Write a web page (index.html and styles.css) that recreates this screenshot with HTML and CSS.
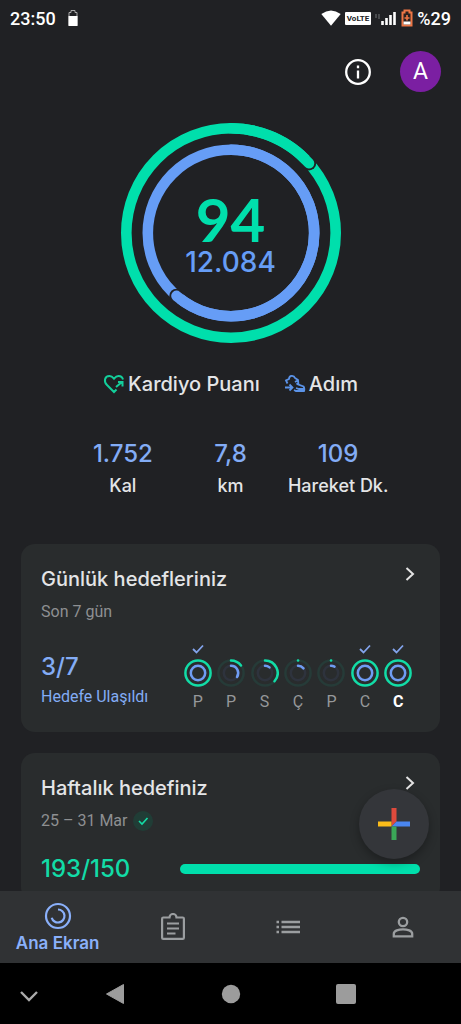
FILE: index.html
```html
<!DOCTYPE html>
<html lang="tr">
<head>
<meta charset="utf-8">
<meta name="viewport" content="width=device-width, initial-scale=1">
<title>Ana Ekran</title>
<link rel="stylesheet" href="styles.css">
</head>
<body>
<div class="screen">
  <header class="status">
    <div class="status-group">
      <span>23:50</span>
      <svg class="status-battery" width="10" height="18" viewBox="0 0 10 18"><path d="M1 16.500V3.500h2V1.500h4v2h2v13z" fill="none" stroke="#aaa"/><path d="M.5 7h9v10h-9z" fill="#fff"/></svg>
    </div>
    <div class="status-group status-right">
      <svg width="20" height="16" viewBox="0 0 20 16"><path d="M.3 4Q10-3.200 19.700 4L10 15.800z" fill="#fff"/></svg>
      <span class="volte">VoLTE</span>
      <svg width="22" height="16" viewBox="0 0 22 16"><path d="M1 4v4M4 4v5" stroke="#55585b" stroke-width="1.500"/><path d="M7.500 11v4M11.500 8v7M15.500 5v10M19.500 2v13" stroke="#fff" stroke-width="2.600"/></svg>
      <svg width="12" height="18" viewBox="0 0 12 18"><path d="M1.500 16.500v-13h2v-2h5v2h2v13z" fill="#2a211f" stroke="#ee7645" stroke-width="2"/><path d="M2.500 12.500h7v3h-7z" fill="#fff"/><path d="M6 6v5.500M3.500 9h5" stroke="#ee7645" stroke-width="1.600"/></svg>
      <span>%29</span>
    </div>
  </header>

  <div class="viewport">
    <main class="content">
      <div class="toolbar">
        <button class="icon-button" aria-label="Bilgi">
          <svg width="28" height="28" viewBox="0 0 28 28" fill="none" stroke="#fff" stroke-width="2.300"><circle cx="14" cy="14" r="11.800"/><path d="M14 12.500v8M14 7.500v2.800"/></svg>
        </button>
        <button class="avatar" aria-label="Hesap">A</button>
      </div>

      <section class="rings">
        <svg class="rings-art" viewBox="0 0 220 220" fill="none">
          <g stroke="#00dfac" stroke-width="10.600">
            <circle cx="110" cy="110" r="104.700"/>
            <circle cx="188" cy="40.200" r="7.200" fill="#202124" stroke="none"/>
            <path d="M110 5.300A104.700 104.700 0 0 1 188 40.200" stroke-linecap="round"/>
          </g>
          <g stroke="#669df6" stroke-width="10.600">
            <circle cx="110" cy="110" r="83.200"/>
            <circle cx="55.500" cy="172.900" r="7.200" fill="#202124" stroke="none"/>
            <path d="M110 26.800A83.200 83.200 0 1 1 55.500 172.900" stroke-linecap="round"/>
          </g>
        </svg>
        <div class="rings-text">
          <strong class="points">94</strong>
          <span class="steps">12.084</span>
        </div>
      </section>

      <div class="legend">
        <span class="legend-item">
          <svg width="22" height="20" viewBox="0 0 22 20" fill="none" stroke="#13cf9b" stroke-width="2"><path d="M13.500 15.500 11 18 4 11C.5 7.500 1.500 2 6.500 2 9 2 10 3.500 11 4.700 12 3.500 13 2 15.500 2c2.500 0 4 1.500 4.500 3.500M13 13l6-5M15 8h4.500v4.500"/></svg>
          Kardiyo Puanı
        </span>
        <span class="legend-item">
          <svg width="22" height="20" viewBox="0 0 22 20" fill="none" stroke="#5b93e8" stroke-width="1.800"><path d="M3.500 9.500 2 6.500 5 5c0-4 5-4 6-1l3 2 .5 4.500 5 2c1 1 1 3.500.5 4.500h-8l-2-1M11 8l2.500-1.500M12.500 10.500l2-1.500M1 13.500h7M5.500 10.500l3 3-3 3M12 14l3 1h5"/></svg>
          Adım
        </span>
      </div>

      <dl class="metrics">
        <div class="metric"><dd>1.752</dd><dt>Kal</dt></div>
        <div class="metric"><dd>7,8</dd><dt>km</dt></div>
        <div class="metric"><dd>109</dd><dt>Hareket Dk.</dt></div>
      </dl>

      <section class="card">
        <div class="card-head">
          <h2>Günlük hedefleriniz</h2>
          <button class="chevron" aria-label="Günlük hedefleri aç"><svg width="10" height="14" viewBox="0 0 10 14"><path d="M1.500 1 8 7l-6.500 6" fill="none" stroke="#e3e3e3" stroke-width="2"/></svg></button>
        </div>
        <p class="sub">Son 7 gün</p>
        <div class="daily">
          <div class="summary">
            <strong>3/7</strong>
            <span>Hedefe Ulaşıldı</span>
          </div>
          <ol class="days">
            <li class="day">
              <svg class="tick" viewBox="0 0 12 10"><path d="m1 5 3.500 3.500L11 1.500"/></svg>
              <svg class="mini" viewBox="0 0 28 28"><circle class="teal" cx="14" cy="14" r="12.600"/><circle class="blue" cx="14" cy="14" r="7.200"/></svg>P</li>
            <li class="day">
              <svg class="mini" viewBox="0 0 28 28"><circle class="teal-dim" cx="14" cy="14" r="12.600"/><circle class="blue-dim" cx="14" cy="14" r="7.200"/><path class="teal" d="M14 1.400A12.600 12.600 0 0 1 24 6.400"/><path class="blue" d="M14 6.800A7.200 7.200 0 0 1 20 18"/></svg>P</li>
            <li class="day">
              <svg class="mini" viewBox="0 0 28 28"><circle class="teal-dim" cx="14" cy="14" r="12.600"/><circle class="blue-dim" cx="14" cy="14" r="7.200"/><path class="teal" d="M14 1.400A12.600 12.600 0 0 1 23.500 22.300"/><path class="blue" d="M14 6.800A7.200 7.200 0 0 1 18.500 8.400"/></svg>S</li>
            <li class="day">
              <svg class="mini" viewBox="0 0 28 28"><circle class="teal-dim" cx="14" cy="14" r="12.600"/><circle class="blue-dim" cx="14" cy="14" r="7.200"/><path class="teal" d="M14 1.400h.1"/><path class="blue" d="M14 6.800A7.200 7.200 0 0 1 19.500 9.400"/></svg>Ç</li>
            <li class="day">
              <svg class="mini" viewBox="0 0 28 28"><circle class="teal-dim" cx="14" cy="14" r="12.600"/><circle class="blue-dim" cx="14" cy="14" r="7.200"/><path class="teal" d="M14 1.400h.1"/><path class="blue" d="M14 6.800A7.200 7.200 0 0 1 17.500 7.700"/></svg>P</li>
            <li class="day">
              <svg class="tick" viewBox="0 0 12 10"><path d="m1 5 3.500 3.500L11 1.500"/></svg>
              <svg class="mini" viewBox="0 0 28 28"><circle class="teal" cx="14" cy="14" r="12.600"/><circle class="blue" cx="14" cy="14" r="7.200"/></svg>C</li>
            <li class="day today">
              <svg class="tick" viewBox="0 0 12 10"><path d="m1 5 3.500 3.500L11 1.500"/></svg>
              <svg class="mini" viewBox="0 0 28 28"><circle class="teal" cx="14" cy="14" r="12.600"/><circle class="blue" cx="14" cy="14" r="7.200"/></svg>C</li>
          </ol>
        </div>
      </section>

      <section class="card">
        <div class="card-head">
          <h2>Haftalık hedefiniz</h2>
          <button class="chevron" aria-label="Haftalık hedefi aç"><svg width="10" height="14" viewBox="0 0 10 14"><path d="M1.500 1 8 7l-6.500 6" fill="none" stroke="#e3e3e3" stroke-width="2"/></svg></button>
        </div>
        <p class="sub">25 – 31 Mar
          <svg width="20" height="20" viewBox="0 0 20 20"><circle cx="10" cy="10" r="10" fill="#203d36"/><path d="m6 10 3 3 5.500-6" fill="none" stroke="#13dca6" stroke-width="1.600"/></svg>
        </p>
        <div class="weekly">
          <strong>193/150</strong>
          <div class="bar" role="progressbar" aria-label="Haftalık hedef" aria-valuenow="193" aria-valuemax="193"></div>
        </div>
      </section>
    </main>
    <button class="fab" aria-label="Ekle">
      <svg width="32" height="32" viewBox="0 0 32 32"><path d="M13.500 0h5v13.500l-5 5z" fill="#de4a3c"/><path d="M0 13.500h13.500v5H0z" fill="#fbbc1a"/><path d="M18.500 13.500H32v5H13.500z" fill="#4a86f0"/><path d="M13.500 18.500h5V32h-5z" fill="#3aa757"/></svg>
    </button>
  </div>

  <nav class="tabs">
    <a class="tab active" href="#home">
      <svg width="28" height="28" viewBox="0 0 28 28" fill="none" stroke="#8ab0fa" stroke-width="2.200"><circle cx="14" cy="14" r="12"/><path d="M14 7.500a6.500 6.500 0 1 1-6.300 8.200"/></svg>
      Ana Ekran
    </a>
    <a class="tab" href="#journal" aria-label="Günlük">
      <svg width="26" height="28" viewBox="0 0 26 28" fill="none" stroke="#9b9ea0" stroke-width="2.200"><path d="M9.500 4.500H3.300a1.200 1.200 0 0 0-1.200 1.200v19c0 .7.500 1.200 1.200 1.200h19.400c.7 0 1.200-.5 1.200-1.200v-19c0-.7-.5-1.200-1.200-1.200h-6.200a3.500 3.500 0 0 0-7 0zM7 10.500h12M7 15.500h12M7 20.500h8.500"/></svg>
    </a>
    <a class="tab" href="#browse" aria-label="Göz at">
      <svg width="24" height="16" viewBox="0 0 24 16" stroke="#9b9ea0" stroke-width="2.600"><path d="M.5 3H3M.5 8H3M.5 13H3M5.500 3H24M5.500 8H24M5.500 13H24"/></svg>
    </a>
    <a class="tab" href="#profile" aria-label="Profil">
      <svg width="22" height="22" viewBox="0 0 22 22" fill="none" stroke="#9b9ea0" stroke-width="2.300"><circle cx="11" cy="6" r="4.200"/><path d="M1.800 20.300v-2.500c0-3 5-4.500 9.200-4.500s9.200 1.500 9.200 4.500v2.500z"/></svg>
    </a>
  </nav>

  <div class="system">
    <button aria-label="Klavyeyi gizle"><svg width="20" height="16" viewBox="0 0 20 16"><path d="m2 6 8 8 8-8" fill="none" stroke="#ababab" stroke-width="2.400"/></svg></button>
    <button aria-label="Geri"><svg width="20" height="22" viewBox="0 0 20 22"><path d="M1.500 11 18.500 1.500v19z" fill="#9c9c9c" stroke="#9c9c9c" stroke-linejoin="round"/></svg></button>
    <button aria-label="Ana sayfa"><svg width="20" height="20" viewBox="0 0 20 20"><circle cx="10" cy="10" r="9.200" fill="#9c9c9c"/></svg></button>
    <button aria-label="Son uygulamalar"><svg width="20" height="20" viewBox="0 0 20 20"><rect width="20" height="20" rx="2" fill="#9c9c9c"/></svg></button>
  </div>
</div>
</body>
</html>
```
FILE: styles.css
```css
* {
  box-sizing: border-box;
}

body {
  margin: 0;
  background: #202124;
  color: #e4e5e7;
  font-family: Roboto, "Noto Sans", sans-serif;
}

button {
  display: flex;
  align-items: center;
  justify-content: center;
  padding: 0;
  border: 0;
  background: none;
  color: inherit;
  font: inherit;
}

svg {
  display: block;
  flex: none;
}

.screen {
  display: flex;
  flex-direction: column;
  height: 100vh;
}

.status {
  display: flex;
  justify-content: space-between;
  align-items: center;
  height: 36px;
  padding: 0 10px;
  color: #fff;
  font-size: 18px;
  font-weight: 500;
}

.status-group {
  display: flex;
  align-items: center;
  gap: 12px;
}

.status-right {
  gap: 4px;
}

.volte {
  padding: 0 2px;
  border-radius: 1px;
  background: #fff;
  color: #202124;
  font-size: 8px;
  font-weight: 700;
  line-height: 13px;
}

.viewport {
  position: relative;
  flex: 1;
  min-height: 0;
}

.content {
  height: 100%;
  overflow: hidden;
}

.toolbar {
  display: flex;
  justify-content: flex-end;
  align-items: center;
  gap: 28px;
  padding: 15px 20px 0;
}

.avatar {
  width: 41px;
  height: 41px;
  border-radius: 50%;
  background: #7b1fa2;
  color: #fff;
  font-size: 23px;
}

.rings {
  display: grid;
  place-items: center;
  margin-top: 31px;
}

.rings-art,
.rings-text {
  grid-area: 1 / 1;
}

.rings-art {
  width: 220px;
}

.rings-text {
  display: flex;
  flex-direction: column;
  align-items: center;
  font-family: Inter, sans-serif;
  font-weight: 500;
}

.points {
  color: #00dfac;
  font-family: Lato, sans-serif;
  font-size: 60px;
  font-weight: 700;
  line-height: 58px;
}

.steps {
  color: #669df6;
  font-size: 28px;
  line-height: 28px;
}

.legend {
  display: flex;
  justify-content: center;
  gap: 24px;
  margin-top: 29px;
  font-family: Inter, sans-serif;
  font-size: 20px;
  font-weight: 500;
  line-height: 24px;
}

.legend-item {
  display: flex;
  align-items: center;
  gap: 3px;
}

.metrics {
  display: grid;
  grid-template-columns: repeat(3, 1fr);
  margin: 42px 69px 0;
  font-family: Inter, sans-serif;
  font-weight: 500;
  text-align: center;
  white-space: nowrap;
}

.metric dd {
  margin: 0;
  color: #83acf5;
  font-size: 24px;
  line-height: 32px;
}

.metric dt {
  font-size: 18px;
  line-height: 32px;
}

.metric {
  display: flex;
  flex-direction: column;
}

.card {
  margin: 21px 21px 0;
  padding: 20px 20px 16px;
  border-radius: 14px;
  background: #292c2d;
}

.metrics + .card {
  margin-top: 42px;
}

.card-head {
  display: flex;
  justify-content: space-between;
}

.card h2 {
  margin: 0;
  font-family: Inter, sans-serif;
  font-size: 20px;
  font-weight: 500;
  line-height: 30px;
}

.chevron {
  width: 20px;
  height: 20px;
}

.sub {
  display: flex;
  align-items: center;
  gap: 6px;
  margin: 6px 0 0;
  color: #8e9092;
  font-size: 16px;
  line-height: 24px;
}

.daily {
  display: flex;
  justify-content: space-between;
  align-items: flex-end;
  margin-top: 20px;
  padding-right: 5px;
}

.summary {
  display: flex;
  flex-direction: column;
  padding-bottom: 4px;
  color: #83acf5;
  font-size: 16px;
  line-height: 30px;
}

.summary strong {
  font-family: Inter, sans-serif;
  font-size: 24px;
  font-weight: 500;
}

.days {
  display: grid;
  grid-template-columns: repeat(7, 1fr);
  width: 234px;
  margin: 0;
  padding: 0;
  list-style: none;
}

.day {
  display: flex;
  flex-direction: column;
  justify-content: flex-end;
  align-items: center;
  color: #96989a;
  font-size: 16px;
  line-height: 29px;
}

.today {
  color: #fff;
  font-weight: 700;
}

.tick {
  width: 12px;
  margin-bottom: 5px;
  fill: none;
  stroke: #83a4ec;
  stroke-width: 1.8;
}

.mini {
  width: 28px;
  fill: none;
  stroke-width: 2.5;
  stroke-linecap: round;
}

.teal {
  stroke: #12dca7;
}

.blue {
  stroke: #6f9cf3;
}

.teal-dim {
  stroke: #263b38;
}

.blue-dim {
  stroke: #2e333d;
}

.weekly {
  display: grid;
  grid-template-columns: 1fr 240px;
  align-items: center;
  margin-top: 20px;
}

.weekly strong {
  color: #12dca7;
  font-family: Inter, sans-serif;
  font-size: 24px;
  font-weight: 500;
  line-height: 32px;
}

.bar {
  height: 10px;
  border-radius: 5px;
  background: #00dfac;
}

.fab {
  position: absolute;
  right: 32px;
  bottom: 32px;
  width: 70px;
  height: 70px;
  border-radius: 50%;
  background: #34363a;
  box-shadow: 0 4px 10px rgba(0, 0, 0, 0.3);
}

.tabs {
  display: grid;
  grid-template-columns: repeat(4, 1fr);
  height: 72px;
  background: #303234;
}

.tab {
  display: flex;
  flex-direction: column;
  align-items: center;
  justify-content: center;
  color: #8ab0fa;
  font-family: Inter, sans-serif;
  font-size: 17px;
  font-weight: 600;
  line-height: 26px;
  text-decoration: none;
  white-space: nowrap;
}

.active {
  padding-top: 3px;
}

.system {
  display: grid;
  grid-template-columns: 1fr 2fr 2fr 2fr 1fr;
  height: 61px;
  background: #000;
}
```
